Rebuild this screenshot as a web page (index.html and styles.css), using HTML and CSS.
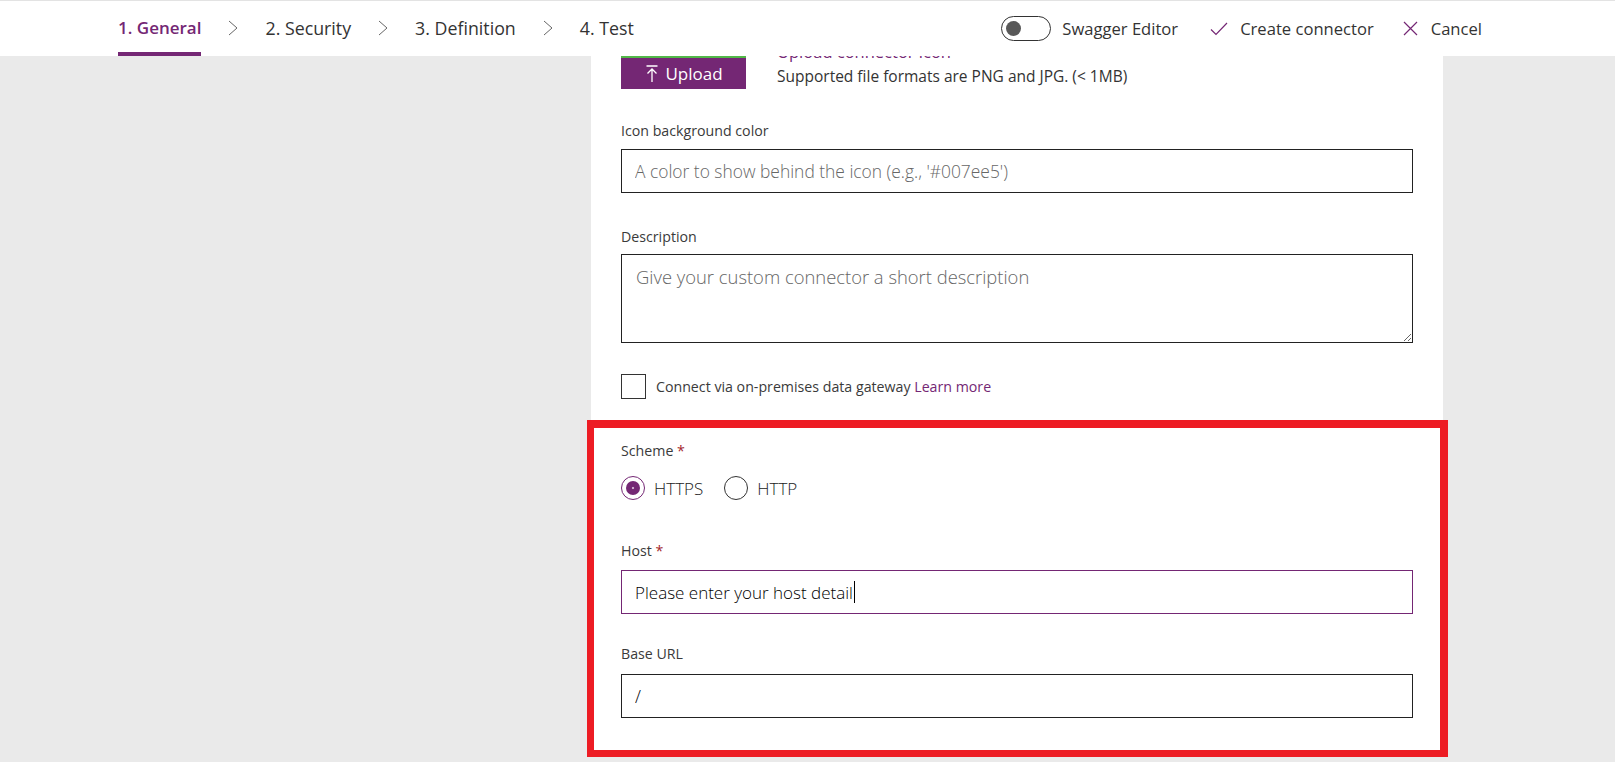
FILE: index.html
```html
<!DOCTYPE html>
<html lang="en">
<head>
<meta charset="utf-8">
<title>Custom connector - General</title>
<link rel="stylesheet" href="styles.css">
</head>
<body>
<header class="topbar">
  <nav class="steps">
    <span class="step active">1. General</span>
    <svg class="chev" width="10" height="16" viewBox="0 0 10 16"><polyline points="1,1 9,8 1,15" fill="none" stroke="#666" stroke-width="1"/></svg>
    <span class="step">2. Security</span>
    <svg class="chev" width="10" height="16" viewBox="0 0 10 16"><polyline points="1,1 9,8 1,15" fill="none" stroke="#666" stroke-width="1"/></svg>
    <span class="step">3. Definition</span>
    <svg class="chev" width="10" height="16" viewBox="0 0 10 16"><polyline points="1,1 9,8 1,15" fill="none" stroke="#666" stroke-width="1"/></svg>
    <span class="step">4. Test</span>
  </nav>
  <div class="actions">
    <span class="toggle"><span class="knob"></span></span>
    <span class="action-text swagger">Swagger Editor</span>
    <svg class="icon-check" width="18" height="14" viewBox="0 0 18 14"><polyline points="1,7.5 6,12.5 17,1" fill="none" stroke="#742774" stroke-width="1.2"/></svg>
    <span class="action-text create">Create connector</span>
    <svg class="icon-x" width="15" height="15" viewBox="0 0 15 15"><path d="M1 1 L14 14 M14 1 L1 14" fill="none" stroke="#742774" stroke-width="1.2"/></svg>
    <span class="action-text">Cancel</span>
  </div>
</header>
<main class="stage">
  <section class="card">
    <div class="upload-row">
      <button class="upload-btn" type="button">
        <svg width="12" height="17" viewBox="0 0 12 17"><path d="M0.5 1 H11.5 M6 4 V17 M1.5 8.5 L6 4 L10.5 8.5" fill="none" stroke="#fff" stroke-width="1.3"/></svg>
        <span>Upload</span>
      </button>
      <div class="upload-info">
        <a class="link" href="#">Upload connector icon</a>
        <p class="hint">Supported file formats are PNG and JPG. (&lt; 1MB)</p>
      </div>
    </div>

    <div class="field field-iconbg">
      <label class="label" for="iconbg">Icon background color</label>
      <input class="input" id="iconbg" type="text" placeholder="A color to show behind the icon (e.g., '#007ee5')">
    </div>

    <div class="field field-desc">
      <label class="label" for="desc">Description</label>
      <textarea class="textarea" id="desc" placeholder="Give your custom connector a short description"></textarea>
    </div>

    <div class="gateway">
      <span class="checkbox"></span>
      <span class="gateway-text">Connect via on-premises data gateway <a class="link" href="#">Learn more</a></span>
    </div>

    <div class="endpoint">
      <div class="label">Scheme <span class="req">*</span></div>
      <div class="radios">
        <span class="radio checked"></span><span class="radio-text">HTTPS</span>
        <span class="radio"></span><span class="radio-text">HTTP</span>
      </div>

      <div class="field field-host">
        <div class="label">Host <span class="req">*</span></div>
        <div class="input input-focused"><span class="value">Please enter your host detail</span><span class="caret"></span></div>
      </div>

      <div class="field field-base">
        <label class="label" for="baseurl">Base URL</label>
        <input class="input input-value" id="baseurl" type="text" value="/">
      </div>
    </div>
  </section>
</main>
</body>
</html>
```
FILE: styles.css
```css
* { box-sizing: border-box; }

html, body {
  margin: 0;
  height: 100%;
}

body {
  font-family: "Open Sans", "Noto Sans", sans-serif;
  color: #333;
  background: #eaeaea;
  overflow: hidden;
  display: flex;
  flex-direction: column;
}

/* ---------- top bar ---------- */
.topbar {
  height: 56px;
  flex: none;
  background: #fff;
  border-top: 1px solid #e3e3e3;
  display: flex;
  justify-content: space-between;
  padding: 0 133px 0 118px;
  position: relative;
  z-index: 2;
}

.steps {
  display: flex;
  align-items: stretch;
  gap: 27px;
}

.step {
  display: flex;
  align-items: center;
  padding-top: 2px;
  border-bottom: 4px solid transparent;
  font-size: 17.8px;
  color: #333;
  white-space: nowrap;
}

.step.active {
  color: #742774;
  font-weight: 600;
  font-size: 17px;
  border-bottom-color: #742774;
}

.chev {
  align-self: center;
  margin-top: -2px;
}

.actions {
  display: flex;
  align-items: center;
}

.toggle {
  width: 50px;
  height: 25px;
  border: 1px solid #333;
  border-radius: 13px;
  display: flex;
  align-items: center;
  padding-left: 4px;
}

.knob {
  width: 15px;
  height: 15px;
  border-radius: 50%;
  background: #595959;
}

.action-text {
  font-size: 16.6px;
  color: #333;
  white-space: nowrap;
}

.swagger { margin-left: 11px; margin-right: 32px; }
.icon-check { margin-right: 12px; }
.create { margin-right: 29px; }
.icon-x { margin-right: 13px; }

/* ---------- stage ---------- */
.stage {
  flex: 1;
  overflow: hidden;
  padding-left: 591px;
  background: #eaeaea;
}

.card {
  width: 852px;
  background: #fff;
  padding: 0 30px;
}

.upload-row {
  margin-top: -14px;
  display: flex;
  align-items: flex-start;
  gap: 31px;
}

.upload-btn {
  margin-top: 14px;
  width: 125px;
  height: 33px;
  border: none;
  border-top: 2px solid #52b848;
  background: #742774;
  color: #fff;
  font-family: inherit;
  font-size: 17px;
  display: flex;
  align-items: center;
  justify-content: center;
  gap: 7px;
  padding: 0 0 1px 2px;
}

.upload-info {
  display: flex;
  flex-direction: column;
}

.link {
  color: #742774;
  text-decoration: none;
}

.upload-info .link {
  font-size: 16.5px;
  line-height: 20px;
}

.hint {
  margin: 4px 0 0;
  font-size: 15.5px;
  line-height: 20px;
  color: #333;
}

.label {
  display: block;
  font-size: 14.2px;
  line-height: 20px;
  color: #3a3a3a;
  font-weight: 400;
}

.req { color: #a4262c; }

.field-iconbg { margin-top: 32px; }
.field-iconbg .label { margin-bottom: 8px; }

.input {
  display: flex;
  align-items: center;
  width: 100%;
  height: 44px;
  border: 1px solid #222;
  padding: 0 13px;
  font-family: inherit;
  font-size: 17.4px;
  font-weight: 300;
  color: #000;
  background: #fff;
  outline: none;
}

.input::placeholder,
.textarea::placeholder {
  color: #666;
  opacity: 1;
}

.field-desc { margin-top: 34px; }
.field-desc .label { margin-bottom: 7px; }

.textarea {
  display: block;
  width: 100%;
  height: 89px;
  border: 1px solid #222;
  padding: 9px 14px;
  font-family: inherit;
  font-size: 18.4px;
  font-weight: 300;
  line-height: 25px;
  resize: vertical;
  outline: none;
}

.gateway {
  margin-top: 31px;
  display: flex;
  align-items: center;
  gap: 10px;
  height: 25px;
}

.checkbox {
  width: 25px;
  height: 25px;
  border: 1px solid #333;
  background: #fff;
}

.gateway-text {
  font-size: 14.2px;
  color: #3a3a3a;
}

/* ---------- highlighted section ---------- */
.endpoint {
  position: relative;
  margin: 29px -30px 0;
  padding: 13px 30px 32px;
}

.endpoint::after {
  content: "";
  position: absolute;
  top: -8px;
  left: -4px;
  right: -5px;
  bottom: -7px;
  border-style: solid;
  border-color: #ed1c24;
  border-width: 8px 8px 7px 7px;
  pointer-events: none;
}

.radios {
  margin-top: 15px;
  display: flex;
  align-items: center;
  height: 24px;
}

.radio {
  width: 24px;
  height: 24px;
  border-radius: 50%;
  border: 1px solid #333;
  display: flex;
  align-items: center;
  justify-content: center;
  margin-right: 9px;
}

.radio.checked {
  border-color: #742774;
}

.radio.checked::after {
  content: "";
  width: 14px;
  height: 14px;
  border-radius: 50%;
  background: radial-gradient(circle, #c9a9c9 0 1px, #742774 1.6px);
}

.radio-text {
  font-size: 17px;
  font-weight: 300;
  color: #222;
  margin-right: 21px;
}

.field-host { margin-top: 41px; }
.field-host .label { margin-bottom: 9px; }

.input-focused {
  border-color: #742774;
  font-size: 17px;
}

.value {
  white-space: nowrap;
}

.caret {
  display: inline-block;
  width: 1px;
  height: 22px;
  background: #000;
  margin-left: 1px;
}

.field-base { margin-top: 30px; }
.field-base .label { margin-bottom: 10px; }
```
